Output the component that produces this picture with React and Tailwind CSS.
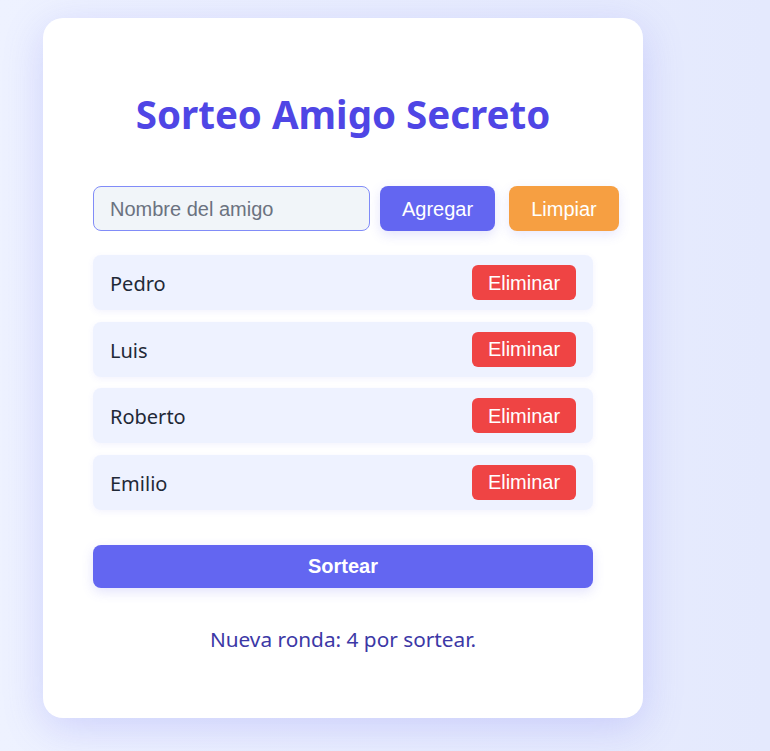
import { useState } from "react";

const segoe = "font-['Segoe_UI','Noto_Sans',sans-serif]";
const arial = "font-['Liberation_Sans',Arial,sans-serif]";

export default function App() {
  const [amigos] = useState(["Pedro", "Luis", "Roberto", "Emilio"]);

  return (
    <main className="min-h-screen bg-gradient-to-r from-[#eef2ff] to-[#e4e9fd] pl-[43px] pt-[18px] pb-[33px]">
      <div className={`h-[700px] w-[600px] rounded-[20px] bg-white px-[50px] shadow-[0_10px_40px_rgba(99,102,241,0.22)] ${segoe}`}>
        <h1 className="pt-[66px] text-center text-[38.5px] font-bold leading-[60px] text-[#4f46e5]">
          Sorteo Amigo Secreto
        </h1>

        <div className="mt-[42px] flex h-[45px] w-[526px] items-stretch">
          <input
            type="text"
            placeholder="Nombre del amigo"
            className={`w-[277px] rounded-[8px] border border-[#818cf8] bg-[#f1f5f9] px-[16px] text-[20px] text-[#111827] outline-none placeholder:text-[#6b7280] ${arial}`}
          />
          <button className={`ml-[10px] w-[115px] rounded-[8px] bg-[#6366f1] text-[20px] text-white shadow-[0_4px_12px_rgba(99,102,241,0.18)] ${arial}`}>
            Agregar
          </button>
          <button className={`ml-[14px] w-[110px] rounded-[8px] bg-[#f69f42] text-[20px] text-white shadow-[0_4px_12px_rgba(99,102,241,0.15)] ${arial}`}>
            Limpiar
          </button>
        </div>

        <ul className="mt-[24px] flex flex-col gap-[11.5px]">
          {amigos.map((nombre) => (
            <li
              key={nombre}
              className="flex h-[55px] items-center justify-between rounded-[8px] bg-[#eef2ff] pl-[17px] pr-[17px] pt-[3px] text-[20px] text-[#1f2937] shadow-[0_2px_6px_rgba(99,102,241,0.08)]"
            >
              <span>{nombre}</span>
              <button className={`-mt-[3px] h-[35px] w-[104px] rounded-[6px] bg-[#ef4444] text-[20px] text-white ${arial}`}>
                Eliminar
              </button>
            </li>
          ))}
        </ul>

        <button className={`mt-[35px] h-[43px] w-full rounded-[8px] bg-[#6366f1] text-[20px] font-bold text-white shadow-[0_4px_12px_rgba(99,102,241,0.18)] ${arial}`}>
          Sortear
        </button>

        <p className="mt-[36px] text-center text-[20.8px] leading-[30px] text-[#3c38a6]">
          Nueva ronda: 4 por sortear.
        </p>
      </div>
    </main>
  );
}
